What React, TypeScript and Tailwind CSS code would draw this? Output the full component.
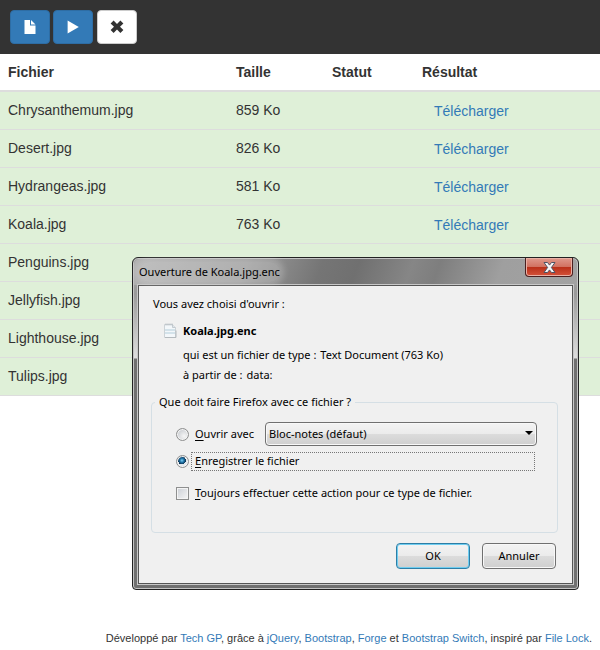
import type { ReactNode } from "react";

type FileRow = { name: string; size?: string };

const files: FileRow[] = [
  { name: "Chrysanthemum.jpg", size: "859 Ko" },
  { name: "Desert.jpg", size: "826 Ko" },
  { name: "Hydrangeas.jpg", size: "581 Ko" },
  { name: "Koala.jpg", size: "763 Ko" },
  { name: "Penguins.jpg" },
  { name: "Jellyfish.jpg" },
  { name: "Lighthouse.jpg" },
  { name: "Tulips.jpg" },
];

function Toolbar() {
  const base = "flex h-[34px] w-10 items-center justify-center rounded border";
  return (
    <header className="flex gap-[3px] bg-[#333] p-2.5">
      <button type="button" aria-label="Fichier" className={`${base} border-[#2e6da4] bg-[#337ab7]`}>
        <svg width="12" height="14" viewBox="0 0 12 14" fill="#fff" aria-hidden="true">
          <path d="M.5 0H6v5.500h5.500V14H.5z" />
          <path d="M7 0l4.500 4.500H7z" />
        </svg>
      </button>
      <button type="button" aria-label="Lancer" className={`${base} border-[#2e6da4] bg-[#337ab7]`}>
        <svg width="12" height="14" viewBox="0 0 12 14" fill="#fff" aria-hidden="true">
          <path d="M.6.500v13L11.800 7z" />
        </svg>
      </button>
      <button type="button" aria-label="Supprimer" className={`${base} ml-px border-[#ccc] bg-white`}>
        <svg width="14" height="14" viewBox="0 0 14 14" fill="#333" aria-hidden="true">
          <path d="M3.600.600 7 4 10.400.600 13.400 3.600 10 6.700 13.400 9.900 10.400 12.900 7 9.500 3.600 12.900.600 9.900 4 6.700.600 3.600z" />
        </svg>
      </button>
    </header>
  );
}

function FileTable() {
  return (
    <table className="w-full table-fixed border-collapse text-left text-sm leading-5 text-[#333]">
      <colgroup>
        <col className="w-[38%]" />
        <col className="w-[16%]" />
        <col className="w-[15%]" />
        <col />
      </colgroup>
      <thead>
        <tr className="h-[37px] border-b-2 border-[#ddd]">
          <th className="px-2">Fichier</th>
          <th className="px-2">Taille</th>
          <th className="px-2">Statut</th>
          <th className="px-2">Résultat</th>
        </tr>
      </thead>
      <tbody>
        {files.map((f) => (
          <tr key={f.name} className="h-[38px] border-b border-[#ddd] bg-[#dff0d8]">
            <td className="px-2">{f.name}</td>
            <td className="px-2">{f.size}</td>
            <td className="px-2" />
            <td className="px-5 pt-0.5">
              {f.size && (
                <a href="#" className="text-[#337ab7]">
                  Télécharger
                </a>
              )}
            </td>
          </tr>
        ))}
      </tbody>
    </table>
  );
}

function Key({ children }: { children: ReactNode }) {
  return <span className="underline underline-offset-2">{children}</span>;
}

function DocumentIcon() {
  return (
    <svg width="14" height="16" viewBox="0 0 14 16" className="shrink-0" aria-hidden="true">
      <path d="M1.500 1.500h8l3 3v10h-11z" fill="#f3f7fa" stroke="#ccd2d6" />
      <path d="M9.500 1.500v3h3" fill="#dfe5e9" stroke="#c4cbd0" />
      <path d="M3 .500v2M5 .500v2M7 .500v2M9 .500v2" stroke="#b4bbc0" />
      <path d="M2 7h10M2 10h10" stroke="#d3e2ea" strokeWidth="2" />
      <path d="M2 14.500h11v-7" fill="none" stroke="#b4babe" />
    </svg>
  );
}

const face = "bg-[linear-gradient(#f3f3f3,#ebebeb_50%,#dcdcdc_50%,#cfcfcf)]";

function Choices() {
  const radio =
    "h-[13px] w-[13px] shrink-0 appearance-none rounded-full border border-[#8e8f8f] shadow-[inset_0_0_0_1px_#f4f4f4]";
  return (
    <fieldset className="mr-3.5 ml-3 h-[139px] rounded border border-[#d5dfe5] pl-6">
      <legend className="-ml-[21px] px-1 leading-4">Que doit faire Firefox avec ce fichier ?</legend>
      <div className="mt-3 flex items-center">
        <input
          id="open"
          type="radio"
          name="action"
          className={`${radio} bg-[radial-gradient(circle_at_65%_65%,#f6f6f6,#bcc0c6)]`}
        />
        <label htmlFor="open" className="ml-1.5 w-[70px] shrink-0 whitespace-nowrap">
          <Key>O</Key>uvrir avec
        </label>
        <div className="relative w-[272px] shrink-0">
          <select
            aria-label="Application"
            className={`block h-6 w-full appearance-none rounded-sm border border-[#707070] px-[3px] leading-4 shadow-[inset_0_0_0_1px_#f8f8f8] ${face}`}
          >
            <option>Bloc-notes (défaut)</option>
          </select>
          <svg width="8" height="4" viewBox="0 0 8 4" className="pointer-events-none absolute top-[9px] right-1" aria-hidden="true">
            <path d="M0 0h8L4 4z" />
          </svg>
        </div>
      </div>
      <div className="mt-1.5 flex items-center">
        <input
          id="save"
          type="radio"
          name="action"
          defaultChecked
          className={`${radio} bg-[radial-gradient(circle_at_45%_40%,#7fd0f5_0,#1f74a8_2px,#0b2c4a_4px,#e4e8ec_4px)]`}
        />
        <label
          htmlFor="save"
          className="ml-0.5 h-[19px] w-[344px] shrink-0 border border-dotted border-[#777] px-[3px] leading-4"
        >
          <Key>E</Key>nregistrer le fichier
        </label>
      </div>
      <div className="mt-3 flex items-center">
        <input
          id="always"
          type="checkbox"
          className="h-[13px] w-[13px] shrink-0 appearance-none border border-[#8e8f8f] bg-[linear-gradient(135deg,#cbcfd5,#f6f6f6)] shadow-[inset_0_0_0_1px_#f4f4f4]"
        />
        <label htmlFor="always" className="ml-1.5 leading-5 whitespace-nowrap">
          <Key>T</Key>oujours effectuer cette action pour ce type de fichier.
        </label>
      </div>
    </fieldset>
  );
}

function DownloadDialog() {
  return (
    <div
      role="dialog"
      aria-labelledby="dialog-title"
      className="absolute top-[257px] left-[132px] w-[447px] rounded-t-md rounded-b-sm border border-[#222] bg-[linear-gradient(#a4a4a4,#9a9a9a_36px,#dedede_100px,#707070_101px,#707070)] font-['Noto_Sans','Open_Sans',sans-serif] text-[11px] leading-5 text-black shadow-[inset_0_0_0_1px_#c4c4c4]"
    >
      <div className="mx-px mt-px flex h-[26px] items-start justify-between rounded-t-md bg-[linear-gradient(110deg,#b0b0b0,#9c9c9c_25%,#757575_42%,#707070_50%,#868686_62%,#7e7e7e_68%,#9f9f9f_82%,#a2a2a2)] pr-1 pl-[5px]">
        <h2 id="dialog-title" className="mt-[3px] rounded-full bg-white/20 leading-5 shadow-[0_0_6px_4px_rgba(255,255,255,0.2)]">
          Ouverture de Koala.jpg.enc
        </h2>
        <button
          type="button"
          aria-label="Fermer"
          className="-mt-px flex h-[19px] w-12 items-center justify-center rounded-b border border-t-0 border-[#4a2020] bg-[linear-gradient(#e0998c,#d1705f_50%,#b92f18_50%,#d4523a)] shadow-[inset_0_0_0_1px_#eab0a5]"
        >
          <svg width="13" height="11" viewBox="0 0 13 11" aria-hidden="true">
            <path
              d="M1 .500h3.500l2 2.600 2-2.600H12L8.400 5.500l3.600 5H8.500l-2-2.600-2 2.600H1l3.600-5z"
              fill="#f7f7f7"
              stroke="#4e5465"
            />
          </svg>
        </button>
      </div>
      <div className="mx-[5px] mb-[5px] border border-[#555] bg-[#f0f0f0] pt-2 pb-3.5 outline outline-[#c8c8c8]">
        <p className="px-3.5">Vous avez choisi d'ouvrir :</p>
        <div className="mt-[7px] flex gap-1.5 pl-6">
          <div className="pt-0.5">
            <DocumentIcon />
          </div>
          <div>
            <p className="font-bold">Koala.jpg.enc</p>
            <dl className="mt-1">
              <div className="flex gap-1">
                <dt>qui est un fichier de type :</dt>
                <dd>Text Document (763 Ko)</dd>
              </div>
              <div className="flex gap-1">
                <dt>à partir de :</dt>
                <dd>data:</dd>
              </div>
            </dl>
          </div>
        </div>
        <div className="mt-[9px]">
          <Choices />
        </div>
        <div className="mt-2.5 flex justify-end gap-3 pr-4">
          <button type="button" className={`h-[26px] w-[74px] rounded-sm border border-[#2d7ea6] shadow-[inset_0_0_0_1px_#6fcdf0] ${face}`}>
            OK
          </button>
          <button type="button" className={`h-[26px] w-[74px] rounded-sm border border-[#707070] shadow-[inset_0_0_0_1px_#f8f8f8] ${face}`}>
            Annuler
          </button>
        </div>
      </div>
    </div>
  );
}

function Link({ children }: { children: ReactNode }) {
  return (
    <a href="#" className="text-[#337ab7]">
      {children}
    </a>
  );
}

export default function App() {
  return (
    <div className="relative min-h-screen bg-white font-['Liberation_Sans',Arial,sans-serif]">
      <Toolbar />
      <FileTable />
      <DownloadDialog />
      <footer className="mt-[234px] pr-2 text-right text-[11px] leading-4 text-[#333]">
        Développé par <Link>Tech GP</Link>, grâce à <Link>jQuery</Link>, <Link>Bootstrap</Link>, <Link>Forge</Link> et{" "}
        <Link>Bootstrap Switch</Link>, inspiré par <Link>File Lock</Link>.
      </footer>
    </div>
  );
}
